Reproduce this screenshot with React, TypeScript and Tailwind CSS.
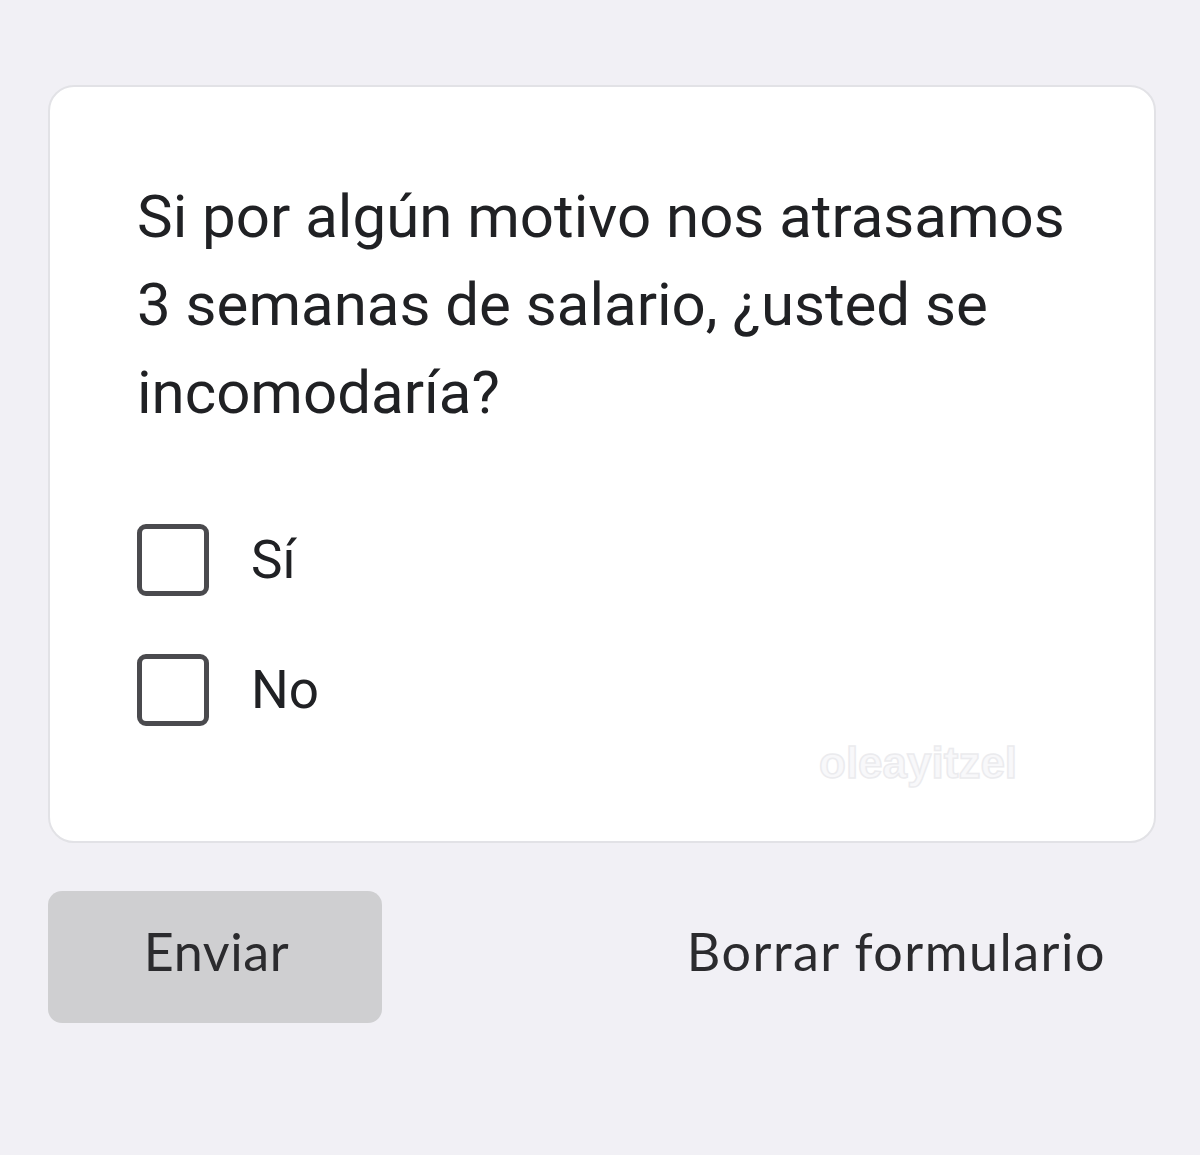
export default function App() {
  return (
    <div className="w-[1200px] h-[1155px] bg-[#f1f0f5] pt-[85px] px-[48px]" style={{ fontFamily: "Roboto, 'Liberation Sans', sans-serif" }}>
      <div className="relative w-[1108px] h-[758px] bg-white border-2 border-[#e2e2e6] rounded-[26px] pl-[87px] pt-[86px]">
        <p className="text-[60px] leading-[88px] text-[#202124] w-[945px]">
          Si por algún motivo nos atrasamos 3 semanas de salario, ¿usted se incomodaría?
        </p>
        <div className="mt-[87px] flex flex-col gap-[58px]">
          {["Sí", "No"].map((o) => (
            <div key={o} className="flex items-center gap-[42px]">
              <div className="w-[72px] h-[72px] border-[5px] border-[#4a4a4e] rounded-[9px]" />
              <span className="text-[53px] leading-none text-[#202124]">{o}</span>
            </div>
          ))}
        </div>
        <div className="absolute left-[769px] top-[654px] text-[44px] leading-none font-bold text-[#f8f8fa] [-webkit-text-stroke:1.5px_#ebebee]" style={{ fontFamily: "'Liberation Sans', sans-serif" }}>
          oleayitzel
        </div>
      </div>
      <div className="mt-[48px] flex items-center justify-between pr-[46px]">
        <button className="w-[334px] h-[132px] bg-[#cfcfd1] rounded-[14px] text-[52px] tracking-[0.6px] text-[#2b2b2e] pb-[13px] pl-[3px]" style={{ fontFamily: "Lato, 'Open Sans', sans-serif" }}>
          Enviar
        </button>
        <span className="text-[52px] tracking-[1.5px] text-[#2b2b2e] pb-[13px]" style={{ fontFamily: "Lato, 'Open Sans', sans-serif" }}>
          Borrar formulario
        </span>
      </div>
    </div>
  );
}
